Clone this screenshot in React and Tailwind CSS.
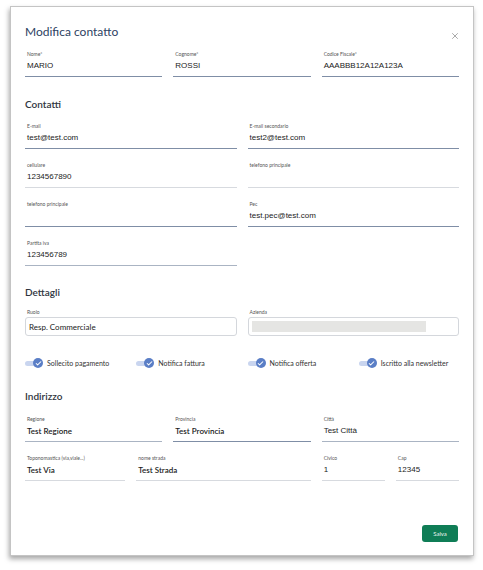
import { X, Check } from 'lucide-react';

const sans = { fontFamily: '"Lato", "Noto Sans", sans-serif' };
const arial = { fontFamily: '"Liberation Sans", Arial, sans-serif' };

// span: 12-column grid classes written out in full
const spans = {
  2: 'col-span-2',
  3: 'col-span-3',
  4: 'col-span-4',
  5: 'col-span-5',
  6: 'col-span-6',
};

function Field({ label, value, span = 4, line = 'dark', font = 'arial' }) {
  const lineClass =
    line === 'dark'
      ? 'border-[#7f8ea6]'
      : line === 'mid'
      ? 'border-[#aab4c3]'
      : 'border-[#d7dadf]';
  return (
    <div className={`${spans[span]} flex flex-col border-b ${lineClass} pb-[5px]`}>
      <div className="h-[6px] text-[5px] leading-[6px] text-[#555] px-[2px]" style={sans}>
        {label}
      </div>
      <div
        className="mt-[4px] h-[10px] text-[8px] leading-[10px] text-[#222] px-[2px] whitespace-nowrap"
        style={font === 'arial' ? arial : { ...sans, fontWeight: 600 }}
      >
        {value}
      </div>
    </div>
  );
}

function Heading({ children, className = '' }) {
  return (
    <div className={`text-[10px] leading-[14px] font-semibold text-[#2f3540] ${className}`} style={sans}>
      {children}
    </div>
  );
}

function Toggle({ label }) {
  return (
    <div className="col-span-3 flex items-center h-[10px]">
      <div className="relative w-[18px] h-[10px] flex items-center">
        <div className="w-[16px] h-[5px] rounded-full bg-[#c9d5ef]" />
        <div className="absolute right-0 top-0 w-[10px] h-[10px] rounded-full bg-[#5a7ec6] flex items-center justify-center">
          <Check size={7} strokeWidth={3.5} color="#fff" />
        </div>
      </div>
      <span className="ml-[4px] text-[7px] leading-[10px] text-[#333]" style={sans}>
        {label}
      </span>
    </div>
  );
}

export default function App() {
  return (
    <div className="w-[483px] h-[570px] bg-white pt-[6px] pl-[10px]">
      <div className="relative w-[464px] h-[550px] bg-white border border-[#c4c4c4] shadow-[-1px_3px_5px_rgba(0,0,0,0.35)] px-[14px] pt-[17px]">
        <div className="text-[12px] leading-[16px] text-[#2d4262]" style={sans}>
          Modifica contatto
        </div>
        <button className="absolute right-[13px] top-[24px] text-[#777]">
          <X size={10} strokeWidth={1.5} />
        </button>

        <div className="grid grid-cols-12 gap-x-[11px] mt-[11px]">
          <Field label="Nome*" value="MARIO" />
          <Field label="Cognome*" value="ROSSI" />
          <Field label="Codice Fiscale*" value="AAABBB12A12A123A" />
        </div>

        <Heading className="mt-[20px]">Contatti</Heading>
        <div className="grid grid-cols-12 gap-x-[11px] gap-y-[13px] mt-[12px]">
          <Field span={6} label="E-mail" value="test@test.com" />
          <Field span={6} label="E-mail secondario" value="test2@test.com" />
          <Field span={6} label="cellulare" value="1234567890" line="light" />
          <Field span={6} label="telefono principale" value="" line="light" />
          <Field span={6} label="telefono principale" value="" />
          <Field span={6} label="Pec" value="test.pec@test.com" />
          <Field span={6} label="Partita iva" value="123456789" line="mid" />
        </div>

        <Heading className="mt-[19px]">Dettagli</Heading>
        <div className="grid grid-cols-12 gap-x-[11px] mt-[10px]">
          <div className="col-span-6 flex flex-col">
            <div className="h-[6px] text-[5px] leading-[6px] text-[#555] px-[2px]" style={sans}>
              Ruolo
            </div>
            <div className="mt-[2px] h-[19px] rounded-[3px] border border-[#d4d7dc] flex items-center px-[3px] text-[8px] text-[#222]" style={sans}>
              Resp. Commerciale
            </div>
          </div>
          <div className="col-span-6 flex flex-col">
            <div className="h-[6px] text-[5px] leading-[6px] text-[#555] px-[2px]" style={sans}>
              Azienda
            </div>
            <div className="mt-[2px] h-[19px] rounded-[3px] border border-[#d4d7dc] flex items-center px-[3px]">
              <div className="w-[174px] h-[11px] bg-[#e5e5e3]" />
            </div>
          </div>
        </div>

        <div className="grid grid-cols-12 gap-x-[11px] mt-[22px]">
          <Toggle label="Sollecito pagamento" />
          <Toggle label="Notifica fattura" />
          <Toggle label="Notifica offerta" />
          <Toggle label="Iscritto alla newsletter" />
        </div>

        <Heading className="mt-[21px]">Indirizzo</Heading>
        <div className="grid grid-cols-12 gap-x-[11px] gap-y-[13px] mt-[13px]">
          <Field label="Regione" value="Test Regione" font="sans" line="mid" />
          <Field label="Provincia" value="Test Provincia" font="sans" />
          <Field label="Città" value="Test Città" line="mid" />
          <Field span={3} label="Toponomastica (via,viale...)" value="Test Via" font="sans" line="light" />
          <Field span={5} label="nome strada" value="Test Strada" font="sans" line="light" />
          <Field span={2} label="Civico" value="1" line="light" />
          <Field span={2} label="Cap" value="12345" line="light" />
        </div>

        <div className="absolute right-[15px] bottom-[13px]">
          <button
            className="w-[36px] h-[17px] rounded-[3px] bg-[#0f7d56] text-[6px] text-[#e8f3ee] flex items-center justify-center"
            style={sans}
          >
            Salva
          </button>
        </div>
      </div>
    </div>
  );
}
